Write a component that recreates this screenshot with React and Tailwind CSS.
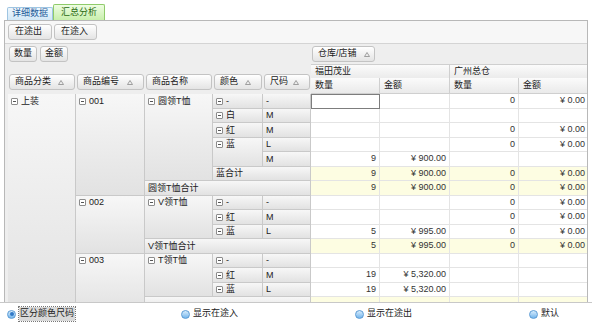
import React from "react";

const Minus = () => (
  <span className="inline-flex w-[7px] h-[7px] border border-[#8c8c8c] bg-white items-center justify-center mr-[3px] shrink-0 rounded-[1px]">
    <span className="w-[3px] h-px bg-[#555]" />
  </span>
);

const Tri = () => (
  <svg width="6" height="5" viewBox="0 0 6 5" className="shrink-0">
    <path d="M3 0.5 L5.5 4.5 L0.5 4.5 Z" fill="none" stroke="#8a8a8a" strokeWidth="0.8" />
  </svg>
);

const Btn = ({ children, cls }) => (
  <div className={`h-[16px] rounded-[3px] border border-[#c3c3c3] bg-linear-to-b from-white to-[#e4e4e4] flex items-center ${cls}`}>
    {children}
  </div>
);

const HC = ({ cls, text, icon }) => (
  <div className={`${cls} bg-linear-to-b from-[#f7f7f7] to-[#e2e2e2] border-r border-b border-[#c9c9c9] pl-[3px] overflow-hidden`}>
    <div className="h-[14.5px] flex items-center whitespace-nowrap">
      {icon && <Minus />}
      <span>{text}</span>
    </div>
  </div>
);

const rows = [
  { v: ["", "", "0", "¥ 0.00"], sel: true },
  { v: ["", "", "", ""] },
  { v: ["", "", "0", "¥ 0.00"] },
  { v: ["", "", "0", "¥ 0.00"] },
  { v: ["9", "¥ 900.00", "", ""] },
  { v: ["9", "¥ 900.00", "0", "¥ 0.00"], y: true },
  { v: ["9", "¥ 900.00", "0", "¥ 0.00"], y: true },
  { v: ["", "", "0", "¥ 0.00"] },
  { v: ["", "", "0", "¥ 0.00"] },
  { v: ["5", "¥ 995.00", "0", "¥ 0.00"] },
  { v: ["5", "¥ 995.00", "0", "¥ 0.00"], y: true },
  { v: ["", "", "", ""] },
  { v: ["19", "¥ 5,320.00", "", ""] },
  { v: ["19", "¥ 5,320.00", "", ""] },
  { v: ["", "", "", ""], y: true },
];

const Radio = ({ on }) => (
  <span className="relative inline-flex w-[9px] h-[9px] rounded-full border border-[#5b9bd5] bg-linear-to-b from-[#d6ecfc] to-[#73b5ec] items-center justify-center mr-[3px] shrink-0">
    {on && <span className="w-[4px] h-[4px] rounded-full bg-[#2f78c8]" />}
  </span>
);

export default function App() {
  return (
    <div className="w-[592px] h-[325px] bg-white overflow-hidden flex flex-col font-['Liberation_Sans','Noto_Sans_CJK_SC',sans-serif] text-[9px] text-[#222]">
      {/* tabs */}
      <div className="h-[20px] flex items-end pl-[7px] shrink-0">
        <div className="w-[46px] h-[13px] border border-b-0 border-[#9fc5e2] rounded-t-[2px] bg-linear-to-b from-[#eef7fe] to-[#d3e8f7] text-[#1f5c9a] flex items-center justify-center">
          详细数据
        </div>
        <div className="w-[52px] h-[16px] border border-b-0 border-[#8fcb6a] rounded-t-[2px] bg-linear-to-b from-[#eefde2] to-[#c8efac] text-[#2b6a12] flex items-center justify-center">
          汇总分析
        </div>
      </div>

      {/* panel */}
      <div className="h-[282px] mx-[4px] border border-b-0 border-[#b8b8b8] flex flex-col overflow-hidden shrink-0">
        <div className="h-[23px] shrink-0 bg-[#f7f7f7] border-b border-[#d4d4d4] flex items-center pl-[3px] gap-[2px]">
          <Btn cls="w-[44px] pl-[6px]">在途出</Btn>
          <Btn cls="w-[43px] pl-[6px]">在途入</Btn>
        </div>

        <div className="flex-1 bg-[#eeeeee] pl-[3px] overflow-hidden">
          {/* top band */}
          <div className="h-[20px] flex items-center">
            <div className="w-[303px] flex items-center gap-[3px] pl-[1px]">
              <Btn cls="w-[28px] pl-[4px]">数量</Btn>
              <Btn cls="w-[28px] pl-[4px]">金额</Btn>
            </div>
            <Btn cls="w-[63px] ml-[1px] pl-[5px] gap-[7px]">
              <span>仓库/店铺</span>
              <Tri />
            </Btn>
          </div>

          {/* header rows */}
          <div className="h-[30px] flex">
            <div className="w-[303px] flex items-end pb-[4px]">
              {[
                ["商品分类", "w-[68px]"],
                ["商品编号", "w-[69px]"],
                ["商品名称", "w-[68px]"],
                ["颜色", "w-[50px]"],
                ["尺码", "w-[48px]"],
              ].map(([t, w]) => (
                <div key={t} className={`${w} px-[1px]`}>
                  <Btn cls="h-[14px] pl-[5px] pr-[10px] justify-between">
                    <span>{t}</span>
                    {t !== "商品名称" && <Tri />}
                  </Btn>
                </div>
              ))}
            </div>
            <div className="w-[278px] flex flex-col">
              <div className="h-[14px] grid grid-cols-[139px_139px]">
                {["福田茂业", "广州总仓"].map((t) => (
                  <div key={t} className="border-t border-r border-b border-[#cfcfcf] bg-linear-to-b from-[#fbfbfb] to-[#eaeaea] pl-[4px] flex items-center">
                    {t}
                  </div>
                ))}
              </div>
              <div className="h-[16px] grid grid-cols-[69px_70px_69px_70px]">
                {["数量", "金额", "数量", "金额"].map((t, i) => (
                  <div key={i} className="border-r border-b border-[#cfcfcf] bg-linear-to-b from-[#fbfbfb] to-[#eaeaea] pl-[4px] flex items-center">
                    {t}
                  </div>
                ))}
              </div>
            </div>
          </div>

          {/* body */}
          <div className="flex">
            <div className="w-[303px] grid grid-cols-[68px_69px_68px_50px_48px] grid-rows-[repeat(15,14.5px)]">
              <HC cls="col-start-1 row-start-1 row-span-15" text="上装" icon />
              <HC cls="col-start-2 row-start-1 row-span-7" text="001" icon />
              <HC cls="col-start-2 row-start-8 row-span-4" text="002" icon />
              <HC cls="col-start-2 row-start-12 row-span-4" text="003" icon />

              <HC cls="col-start-3 row-start-1 row-span-6" text="圆领T恤" icon />
              <HC cls="col-start-3 col-span-3 row-start-7" text="圆领T恤合计" />
              <HC cls="col-start-3 row-start-8 row-span-3" text="V领T恤" icon />
              <HC cls="col-start-3 col-span-3 row-start-11" text="V领T恤合计" />
              <HC cls="col-start-3 row-start-12 row-span-3" text="T领T恤" icon />
              <HC cls="col-start-3 col-span-3 row-start-15" text="" />

              <HC cls="col-start-4 row-start-1" text="-" icon />
              <HC cls="col-start-4 row-start-2" text="白" icon />
              <HC cls="col-start-4 row-start-3" text="红" icon />
              <HC cls="col-start-4 row-start-4 row-span-2" text="蓝" icon />
              <HC cls="col-start-4 col-span-2 row-start-6" text="蓝合计" />
              <HC cls="col-start-4 row-start-8" text="-" icon />
              <HC cls="col-start-4 row-start-9" text="红" icon />
              <HC cls="col-start-4 row-start-10" text="蓝" icon />
              <HC cls="col-start-4 row-start-12" text="-" icon />
              <HC cls="col-start-4 row-start-13" text="红" icon />
              <HC cls="col-start-4 row-start-14" text="蓝" icon />

              <HC cls="col-start-5 row-start-1" text="-" />
              <HC cls="col-start-5 row-start-2" text="M" />
              <HC cls="col-start-5 row-start-3" text="M" />
              <HC cls="col-start-5 row-start-4" text="L" />
              <HC cls="col-start-5 row-start-5" text="M" />
              <HC cls="col-start-5 row-start-8" text="-" />
              <HC cls="col-start-5 row-start-9" text="M" />
              <HC cls="col-start-5 row-start-10" text="L" />
              <HC cls="col-start-5 row-start-12" text="-" />
              <HC cls="col-start-5 row-start-13" text="M" />
              <HC cls="col-start-5 row-start-14" text="L" />
            </div>

            <div className="w-[278px] flex flex-col bg-white">
              {rows.map((r, i) => (
                <div key={i} className={`h-[14.5px] grid grid-cols-[69px_70px_69px_70px] ${r.y ? "bg-[#fdfde2]" : "bg-white"}`}>
                  {r.v.map((c, j) => (
                    <div
                      key={j}
                      className={`flex items-center justify-end pr-[3px] text-[#333] ${
                        r.sel && j === 0 ? "border border-[#7d7d7d]" : "border-r border-b border-[#e4e4e4]"
                      }`}
                    >
                      {c}
                    </div>
                  ))}
                </div>
              ))}
            </div>
          </div>
        </div>
      </div>

      {/* radios */}
      <div className="flex-1 border-t border-[#c8c8c8] grid grid-cols-[174px_174px_174px_1fr] pl-[7px] items-center">
        <div className="flex items-center">
          <Radio on />
          <span className="bg-[#d9d9d9] px-[1px] outline-1 outline-dotted outline-[#777]">区分颜色尺码</span>
        </div>
        <div className="flex items-center">
          <Radio />
          <span>显示在途入</span>
        </div>
        <div className="flex items-center">
          <Radio />
          <span>显示在途出</span>
        </div>
        <div className="flex items-center">
          <Radio />
          <span>默认</span>
        </div>
      </div>
    </div>
  );
}
